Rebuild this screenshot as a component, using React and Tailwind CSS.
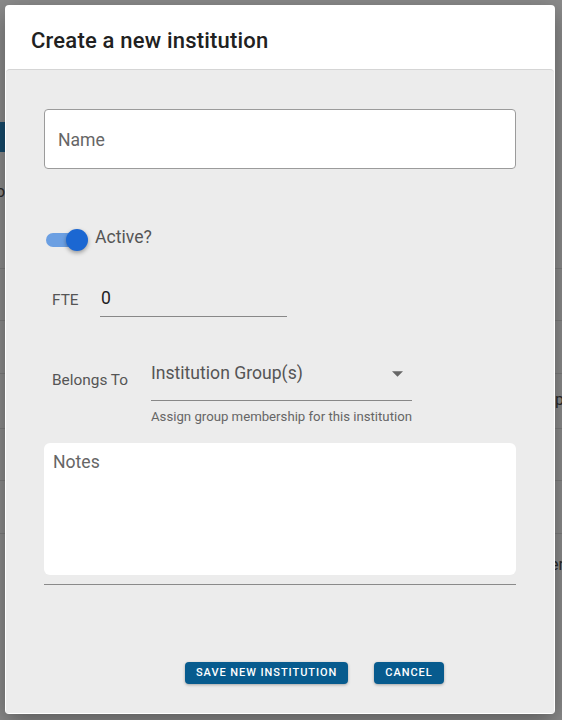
import React from "react";

// backdrop lines of the page behind the dialog
const rowLines = [268, 320, 373, 428, 480, 533];

export default function App() {
    return (
        <div
            className="relative w-[562px] h-[720px] overflow-hidden bg-[#8b8b8b]"
            style={{ fontFamily: "Roboto, 'Liberation Sans', sans-serif" }}
        >
            {/* page behind the overlay */}
            <div className="absolute left-0 top-[122px] w-[6px] h-[30px] bg-[#164a6b]" />
            <div className="absolute -left-[4px] top-[180px] text-[16px] text-[#2a2a2a]">o</div>
            <div className="absolute -right-[2px] top-[388px] text-[16px] text-[#2a2a2a]">up</div>
            <div className="absolute -right-[2px] top-[553px] text-[16px] text-[#2a2a2a]">er</div>
            {rowLines.map((y) => (
                <div
                    key={y}
                    className="absolute left-0 right-0 h-px bg-[#7c7c7c]"
                    style={{ top: y }}
                />
            ))}

            {/* dialog */}
            <div className="absolute left-[5px] top-[5px] w-[550px] h-[709px] flex flex-col rounded-[4px] bg-white shadow-[0_8px_24px_rgba(0,0,0,0.35)] overflow-hidden">
                <div className="h-[64px] shrink-0 pl-[26px] pt-[23px]">
                    <h1 className="text-[22px] leading-[26px] font-medium tracking-[0.2px] text-[#212121]">
                        Create a new institution
                    </h1>
                </div>
                <div className="flex-1 mx-px mb-px flex flex-col bg-[#ececec] border-t border-[#d5d5d5] rounded-t-[4px] px-[38px] pt-[39px]">
                    {/* Name */}
                    <div className="h-[60px] flex items-center rounded-[4px] border border-[#9b9b9b] bg-white px-[13px]">
                        <span className="text-[17.6px] text-[#666] mt-[3px]">Name</span>
                    </div>

                    {/* Active toggle */}
                    <div className="mt-[60px] flex items-center h-[22px]">
                        <div className="relative w-[44px] h-[22px] ml-[2px]">
                            <div className="absolute left-0 top-[4px] w-[40px] h-[14px] rounded-full bg-[#6b9fe2]" />
                            <div className="absolute left-[20px] top-0 w-[22px] h-[22px] rounded-full bg-[#1b67d2] shadow-[0_2px_4px_rgba(0,0,0,0.35)]" />
                        </div>
                        <span className="ml-[5px] -mt-[6px] text-[17.6px] text-[#555]">Active?</span>
                    </div>

                    {/* FTE */}
                    <div className="mt-[35px] flex items-start">
                        <span className="ml-[8px] mt-[3px] w-[48px] text-[15.4px] text-[#555]">FTE</span>
                        <div className="w-[187px] h-[31px] border-b border-[#888] pl-px">
                            <span className="text-[17.6px] leading-[24px] text-[#222]">0</span>
                        </div>
                    </div>

                    {/* Belongs To */}
                    <div className="mt-[43px] flex items-start">
                        <span className="ml-[8px] mt-[10px] w-[99px] text-[15.4px] leading-[20px] text-[#555]">Belongs To</span>
                        <div className="flex flex-col w-[261px]">
                            <div className="h-[41px] flex items-start justify-between border-b border-[#888] pt-[2px]">
                                <span className="text-[17.6px] leading-[22px] text-[#555]">Institution Group(s)</span>
                                <svg width="11" height="6" viewBox="0 0 10 5" className="mr-[9px] mt-[9px]">
                                    <path d="M0 0h10L5 5z" fill="#666" />
                                </svg>
                            </div>
                            <span className="mt-[8px] text-[13.2px] leading-[16px] text-[#666]">
                                Assign group membership for this institution
                            </span>
                        </div>
                    </div>

                    {/* Notes */}
                    <div className="mt-[18px] h-[132px] rounded-[6px] bg-white px-[9px] pt-[6px]">
                        <span className="text-[17.6px] text-[#666]">Notes</span>
                    </div>
                    <div className="mt-[9px] h-px bg-[#8a8a8a]" />

                    {/* actions */}
                    <div className="mt-[77px] flex gap-[26px] pl-[141px]">
                        <button className="h-[22px] px-[11px] rounded-[4px] bg-[#075b8e] text-white text-[11px] font-medium tracking-[0.95px] shadow-[0_1px_3px_rgba(0,0,0,0.3)]">
                            SAVE NEW INSTITUTION
                        </button>
                        <button className="h-[22px] px-[11px] rounded-[4px] bg-[#075b8e] text-white text-[11px] font-medium tracking-[0.95px] shadow-[0_1px_3px_rgba(0,0,0,0.3)]">
                            CANCEL
                        </button>
                    </div>
                </div>
            </div>
        </div>
    );
}
